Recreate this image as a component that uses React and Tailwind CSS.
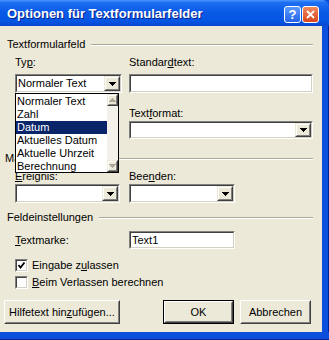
import React from "react";

// Windows-XP-artiger Dialog "Optionen für Textformularfelder"

const Sunken = ({ className = "", children }) => (
  <div className={`border border-t-[#808080] border-l-[#808080] border-r-white border-b-white ${className}`}>
    <div className="h-full border border-t-[#404040] border-l-[#404040] border-r-[#d4d0c8] border-b-[#d4d0c8] bg-white flex items-center">
      {children}
    </div>
  </div>
);

const Arrow = ({ color = "#000", up = false }) => (
  <svg width="7" height="4" viewBox="0 0 7 4" shapeRendering="crispEdges">
    <path d={up ? "M0 4h7L3.5 0z" : "M0 0h7L3.5 4z"} fill={color} />
  </svg>
);

const Raised = ({ className = "", children }) => (
  <div className={`border border-t-[#ece9d8] border-l-[#ece9d8] border-r-[#404040] border-b-[#404040] ${className}`}>
    <div className="h-full border border-t-white border-l-white border-r-[#808080] border-b-[#808080] bg-[#ece9d8] flex items-center justify-center">
      {children}
    </div>
  </div>
);

const Combo = ({ className = "", value }) => (
  <Sunken className={className}>
    <div className="flex-1 pl-[1px] leading-[13px] whitespace-nowrap overflow-hidden">{value}</div>
    <Raised className="h-full w-[16px]">
      <Arrow />
    </Raised>
  </Sunken>
);

const PushButton = ({ className = "", isDefault = false, children }) => (
  <div className={`${isDefault ? "border border-black" : ""} ${className}`}>
    <div className="h-full border border-t-white border-l-white border-r-[#404040] border-b-[#404040]">
      <div className="h-full border border-t-[#ece9d8] border-l-[#ece9d8] border-r-[#808080] border-b-[#808080] bg-[#ece9d8] flex items-center justify-center leading-[13px]">
        {children}
      </div>
    </div>
  </div>
);

const Label = ({ className = "", children }) => (
  <div className={`h-[13px] leading-[13px] whitespace-nowrap ${className}`}>{children}</div>
);

const Acc = ({ children }) => <span className="underline underline-offset-[1px]">{children}</span>;

const GroupLabel = ({ label, className = "" }) => (
  <div className={`flex items-center h-[13px] pr-[9px] ${className}`}>
    <span className="leading-[13px] whitespace-nowrap">{label}</span>
    <div className="flex-1 ml-[6px] border-t border-t-[#aca899] border-b border-b-white"></div>
  </div>
);

const CheckBox = ({ checked, children }) => (
  <div className="flex items-center h-[13px] pl-[15px]">
    <Sunken className="w-[13px] h-[13px]">
      {checked && (
        <svg width="9" height="9" viewBox="0 0 9 9">
          <polyline points="1.5,4 3.5,6.5 7.5,1.5" fill="none" stroke="#000" strokeWidth="1.8" />
        </svg>
      )}
    </Sunken>
    <span className="ml-[4px] leading-[13px]">{children}</span>
  </div>
);

const typItems = ["Normaler Text", "Zahl", "Datum", "Aktuelles Datum", "Aktuelle Uhrzeit", "Berechnung"];

const App = () => {
  return (
    <div className="w-[329px] h-[340px] flex flex-col bg-[#0a50dc] font-['Liberation_Sans',Arial,sans-serif] text-[11px] text-black select-none">
      {/* Titelleiste */}
      <div className="h-[26px] flex items-center rounded-tr-[7px] bg-[linear-gradient(to_bottom,#4d97ff_0%,#1c6ff2_10%,#0a5ae8_45%,#0656e4_80%,#0847cf_100%)]">
        <span className="pl-[7px] pt-[2px] text-[13px] font-bold text-white [text-shadow:1px_1px_0_#0a1e8a]">
          Optionen für Textformularfelder
        </span>
        <div className="ml-auto flex gap-[1px] pr-[10px] pt-[2px]">
          <div className="w-[17px] h-[17px] rounded-[3px] border border-white bg-[linear-gradient(to_bottom,#5a9bff,#2463e8)] flex items-center justify-center text-white font-bold text-[13px] leading-none">
            ?
          </div>
          <div className="w-[17px] h-[17px] rounded-[3px] border border-white bg-[linear-gradient(to_bottom,#f08a5e,#d8451c)] flex items-center justify-center">
            <svg width="9" height="9" viewBox="0 0 9 9">
              <path d="M1 1L8 8M8 1L1 8" stroke="#fff" strokeWidth="1.8" />
            </svg>
          </div>
        </div>
      </div>

      <div className="flex flex-1">
        {/* Dialoginhalt */}
        <div className="relative w-[322px] h-[306px] bg-[#ece9d8] pt-[12px]">
          <GroupLabel label="Textformularfeld" className="pl-[7px]" />

          <div className="mt-[5px] flex pl-[15px]">
            <div className="w-[107px]">
              <Label>
                Ty<Acc>p</Acc>:
              </Label>
              <Combo className="mt-[5px] h-[19px]" value="Normaler Text" />
            </div>
            <div className="ml-[7px] w-[184px]">
              <Label>
                Standar<Acc>d</Acc>text:
              </Label>
              <Sunken className="mt-[5px] h-[19px]" />
            </div>
          </div>

          <div className="mt-[14px] flex pl-[15px]">
            <div className="w-[107px]"></div>
            <div className="ml-[7px] w-[184px]">
              <Label>
                Text<Acc>f</Acc>ormat:
              </Label>
              <Combo className="mt-[1px] h-[18px]" value="" />
            </div>
          </div>

          <GroupLabel label="Makros ausführen bei" className="mt-[13px] pl-[5px]" />

          <div className="mt-[5px] flex pl-[15px]">
            <div className="w-[105px]">
              <Label>
                <Acc>E</Acc>reignis:
              </Label>
              <Combo className="mt-[1px] h-[19px]" value="" />
            </div>
            <div className="ml-[9px] w-[106px]">
              <Label>
                Bee<Acc>n</Acc>den:
              </Label>
              <Combo className="mt-[1px] h-[19px]" value="" />
            </div>
          </div>

          <GroupLabel label="Feldeinstellungen" className="mt-[8px] pl-[7px]" />

          <div className="mt-[7px] flex items-center pl-[15px]">
            <Label className="w-[114px]">
              <Acc>T</Acc>extmarke:
            </Label>
            <Sunken className="w-[106px] h-[18px]">
              <span className="pl-[1px] leading-[13px]">Text1</span>
            </Sunken>
          </div>

          <div className="mt-[10px]">
            <CheckBox checked>
              Eingabe z<Acc>u</Acc>lassen
            </CheckBox>
          </div>
          <div className="mt-[4px]">
            <CheckBox>
              <Acc>B</Acc>eim Verlassen berechnen
            </CheckBox>
          </div>

          <div className="mt-[11px] flex pl-[4px]">
            <PushButton className="w-[116px] h-[24px]">
              Hilfetext hin<Acc>z</Acc>ufügen...
            </PushButton>
            <PushButton isDefault className="ml-[43px] w-[71px] h-[24px]">
              OK
            </PushButton>
            <PushButton className="ml-[6px] w-[71px] h-[24px]">Abbrechen</PushButton>
          </div>

          {/* aufgeklappte Liste des Typ-Feldes */}
          <div className="absolute left-[15px] top-[67px] w-[104px] h-[80px] border border-black bg-white flex">
            <div className="flex-1 pt-[1px]">
              {typItems.map((item) => (
                <div
                  key={item}
                  className={`h-[13px] leading-[13px] pl-[1px] whitespace-nowrap ${
                    item === "Datum" ? "bg-[#0a246a] text-white" : ""
                  }`}
                >
                  {item}
                </div>
              ))}
            </div>
            <div className="w-[11px] flex flex-col bg-[#f3f1ea]">
              <Raised className="h-[12px] w-[11px]">
                <Arrow color="#aca899" up />
              </Raised>
              <div className="flex-1"></div>
              <Raised className="h-[12px] w-[11px]">
                <Arrow color="#aca899" />
              </Raised>
            </div>
          </div>
        </div>
        <div className="flex-1 border-r border-r-[#00209a]"></div>
      </div>
      <div className="h-[8px] border-b border-b-[#00209a]"></div>
    </div>
  );
};

export default App;
